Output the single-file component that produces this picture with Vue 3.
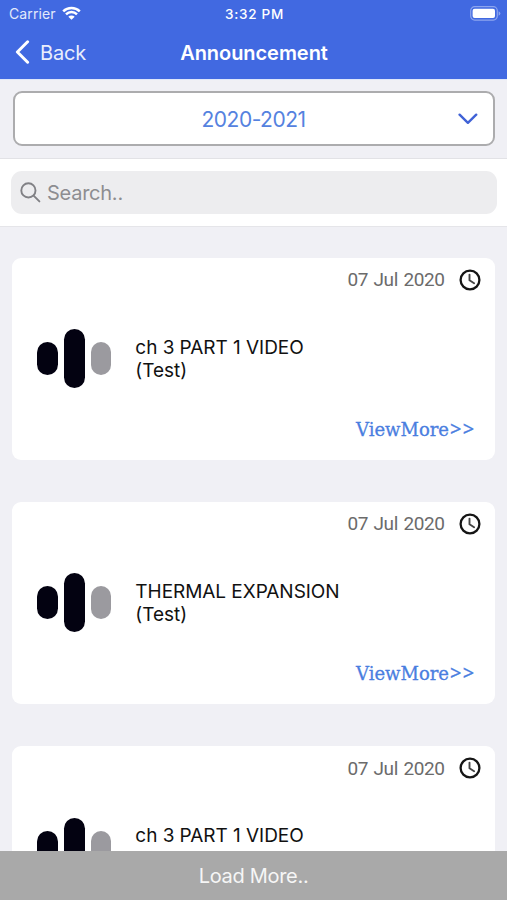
<script setup>
const cards = [
  { id: 1, date: '07 Jul 2020', title: 'ch 3 PART 1 VIDEO', sub: '(Test)' },
  { id: 2, date: '07 Jul 2020', title: 'THERMAL EXPANSION', sub: '(Test)' },
  { id: 3, date: '07 Jul 2020', title: 'ch 3 PART 1 VIDEO' },
]
</script>

<template>
  <div class="screen">
    <header class="header">
      <div class="status">
        <div class="carrier">
          <span>Carrier</span>
          <svg class="wifi" viewBox="0 0 19 14" width="19" height="14">
            <path d="M1.2 5.3a11.8 11.8 0 0 1 16.6 0" />
            <path d="M4 8.3a7.8 7.8 0 0 1 11 0" />
            <path class="dot" d="M6.3 10.7a4.6 4.6 0 0 1 6.4 0L9.5 13.8z" />
          </svg>
        </div>
        <span class="time">3:32 PM</span>
        <svg class="battery" viewBox="0 0 31 15" width="31" height="15">
          <rect class="shell" x="0.7" y="0.7" width="26.6" height="13.4" rx="4" />
          <rect class="charge" x="2.6" y="2.7" width="22.4" height="9.4" rx="2" />
          <path class="tip" d="M28.6 5.2q1.8.8 1.8 2.3t-1.8 2.3z" />
        </svg>
      </div>
      <nav class="nav">
        <div class="back">
          <svg viewBox="0 0 15 24" width="15" height="24"><path d="M12.6 1.8 2.4 12l10.2 10.2" /></svg>
          <span>Back</span>
        </div>
        <h1>Announcement</h1>
      </nav>
    </header>

    <section class="year">
      <div class="select">
        <span>2020-2021</span>
        <svg viewBox="0 0 20 12" width="20" height="12"><path d="m1.6 1.7 8.3 8.1 8.3-8.1" /></svg>
      </div>
    </section>

    <section class="search">
      <div class="field">
        <svg viewBox="0 0 21 21" width="21" height="21">
          <circle cx="8.4" cy="8.4" r="7.1" />
          <path d="m13.6 13.6 5.8 5.8" />
        </svg>
        <span>Search..</span>
      </div>
    </section>

    <main class="list">
      <article v-for="card in cards" :key="card.id" class="card">
        <div class="meta">
          <span>{{ card.date }}</span>
          <svg viewBox="0 0 22 22" width="22" height="22">
            <circle cx="11" cy="11" r="9.4" />
            <path d="M10.5 5.6v5.7l4.6 3" />
          </svg>
        </div>
        <div class="body">
          <div class="bars"><i class="bar"></i><i class="bar tall"></i><i class="bar pale"></i></div>
          <div class="text">
            <div>{{ card.title }}</div>
            <div v-if="card.sub">{{ card.sub }}</div>
          </div>
        </div>
        <a v-if="card.sub" class="more">ViewMore<span>&gt;&gt;</span></a>
      </article>
    </main>

    <footer class="load"><span>Load More..</span></footer>
  </div>
</template>

<style>
body { overflow: hidden; }
</style>

<style scoped>
.screen {
  width: 507px;
  height: 900px;
  display: flex;
  flex-direction: column;
  overflow: hidden;
  background: #f0f0f5;
  font-family: Inter, "Liberation Sans", sans-serif;
}
svg { display: block; flex: none; fill: none; stroke-linecap: round; stroke-linejoin: round; }
.header { height: 79px; flex: none; background: #4169e1; color: #fff; box-sizing: border-box; }
.status { height: 27px; display: grid; grid-template-columns: 1fr auto 1fr; align-items: center; padding: 0 6px 0 9px; }
.carrier { display: flex; align-items: center; gap: 6px; font-size: 14px; letter-spacing: 0.1px; color: #e3e9fb; }
.wifi { stroke: #fff; stroke-width: 2.5; stroke-linecap: butt; margin-top: -2px; }
.wifi .dot { fill: #fff; stroke: none; }
.time { font-size: 13.5px; font-weight: 500; letter-spacing: 0.7px; padding-right: 1px; }
.battery { justify-self: end; margin-top: -1px; }
.shell { stroke: #8da5ee; stroke-width: 1.2; }
.charge { fill: #fff; }
.tip { fill: #8da5ee; }
.nav { height: 51px; display: grid; grid-template-columns: 1fr auto 1fr; align-items: center; padding: 0 14px 0 15px; }
.back { display: flex; align-items: center; gap: 10px; font-size: 20px; letter-spacing: -0.2px; color: #e9eefc; }
.back svg { stroke: #fff; stroke-width: 3; margin-top: -2px; }
h1 { margin: 0; font-size: 20px; font-weight: 600; letter-spacing: -0.05px; }
.year { height: 80px; flex: none; box-sizing: border-box; padding: 11px 12.5px 12px; border-top: 1px solid #dfe7fa; border-bottom: 1px solid #e2e2e6; }
.select { height: 55px; box-sizing: border-box; border: 2px solid #acacae; border-radius: 9px; background: #fff; display: grid; grid-template-columns: 1fr auto 1fr; align-items: center; color: #5582df; font-size: 21px; letter-spacing: -0.5px; padding: 1px 15px 0 15px; }
.select span { grid-column: 2; }
.select svg { justify-self: end; stroke: #4062d6; stroke-width: 2.4; }
.search { height: 68px; flex: none; box-sizing: border-box; padding: 12px 10px 12px 11px; background: #fff; border-bottom: 1px solid #e5e5e9; }
.field { height: 43px; border-radius: 11px; background: #ededef; display: flex; align-items: center; padding-left: 9px; gap: 6px; color: #8d8d91; font-size: 20px; letter-spacing: -0.25px; }
.field svg { stroke: #818185; stroke-width: 1.9; }
.field span { padding-top: 1px; }
.list { flex: 1; min-height: 0; overflow: hidden; padding: 30.5px 12.3px 0; display: flex; flex-direction: column; gap: 42.3px; }
.card { height: 202px; flex: none; box-sizing: border-box; background: #fff; border-radius: 9px; padding: 11px 14px 18px 25px; display: flex; flex-direction: column; }
.meta { display: flex; align-items: center; justify-content: flex-end; gap: 14px; height: 22px; color: #6b6b6b; font-family: Roboto, sans-serif; font-size: 19px; letter-spacing: -0.35px; word-spacing: 1px; }
.meta svg { stroke: #151515; stroke-width: 2.3; }
.meta path { stroke: #444; stroke-width: 1.9; }
.body { display: flex; align-items: center; gap: 24px; height: 60px; margin-top: 38px; }
.bars { display: flex; align-items: center; gap: 6px; }
.bar { width: 20.7px; height: 33px; border-radius: 10.5px; background: #030211; }
.tall { height: 59px; }
.pale { background: #9b9a9f; }
.text { align-self: flex-start; padding-top: 7px; font-size: 19px; letter-spacing: -0.05px; line-height: 23.4px; color: #111; }
.more { align-self: flex-end; margin: 28px 5px 0 0; height: 24px; line-height: 24px; color: #4a7ee0; font-family: "DejaVu Serif", serif; font-size: 18px; -webkit-text-stroke: 0.3px #4a7ee0; }
.more span { font-family: "Noto Sans", sans-serif; font-size: 20px; letter-spacing: 1.4px; margin-left: 1px; }
.load { height: 49px; flex: none; background: #a9a9a9; color: #f6f6f6; display: flex; align-items: center; justify-content: center; font-size: 20px; letter-spacing: -0.3px; padding-top: 1px; box-sizing: border-box; }
</style>
